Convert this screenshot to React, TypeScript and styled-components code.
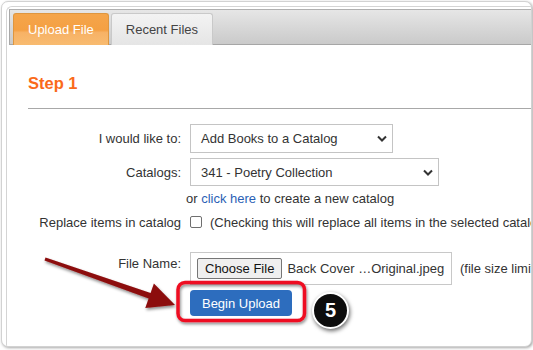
import React from 'react';
import styled, { createGlobalStyle } from 'styled-components';

const GlobalStyle = createGlobalStyle`
  html, body {
    margin: 0;
    padding: 0;
    background: #fff;
    font-family: "Liberation Sans", Arial, sans-serif;
  }
`;

const Page = styled.div`
  position: relative;
  width: 533px;
  height: 350px;
  overflow: hidden;
`;

const Frame = styled.div`
  box-sizing: border-box;
  margin: 1px 0 0 1px;
  width: 531px;
  height: 346px;
  border: 1px solid #d2d2d2;
  border-radius: 7px;
  box-shadow: 1px 1px 3px rgba(0, 0, 0, 0.35);
  overflow: hidden;
  background: #fff;
`;

const Inner = styled.div`
  box-sizing: border-box;
  margin: 4px 0 0 4px;
  height: calc(100% - 4px);
  padding: 2px 0 0 2px;
  border-left: 1px solid #d4d4d4;
  border-top: 1px solid #d4d4d4;
  border-top-left-radius: 6px;
`;

const TabBar = styled.div`
  display: flex;
  gap: 2px;
  height: 34px;
  padding-left: 3px;
  border-top: 1px solid #b0b0b0;
  border-left: 1px solid #a8a8a8;
  border-bottom: 1px solid #a6a6a6;
  background: linear-gradient(to bottom, #e6e6e6, #cacaca);
`;

const Tab = styled.div<{ $active?: boolean }>`
  box-sizing: border-box;
  margin-top: 3px;
  height: 32px;
  padding: 0 14px;
  display: flex;
  align-items: center;
  font-size: 13px;
  border-radius: 3px 3px 0 0;
  border: 1px solid ${p => (p.$active ? '#de963f' : '#c9c9c9')};
  border-bottom: none;
  color: ${p => (p.$active ? '#fff' : '#444')};
  background: ${p =>
    p.$active
      ? 'linear-gradient(to bottom, #f5a54a 0%, #f4a043 52%, #f7b266 60%, #f8bb70 100%)'
      : 'linear-gradient(to bottom, #f3f3f3, #e5e5e5)'};
`;

const Heading = styled.h2`
  margin: 28px 0 0 19px;
  font-size: 16.5px;
  line-height: 20px;
  font-weight: bold;
  color: #fa6a1a;
`;

const Rule = styled.div`
  margin: 15px 0 0 19px;
  border-top: 1px solid #a8a8a8;
`;

const Row = styled.div<{ $h: number; $mt: number }>`
  display: flex;
  align-items: center;
  height: ${p => p.$h}px;
  margin-top: ${p => p.$mt}px;
  font-size: 13px;
  color: #333;
  white-space: nowrap;
`;

const Label = styled.label<{ $top?: boolean }>`
  flex: none;
  width: 172px;
  margin-right: 9px;
  text-align: right;
  line-height: 15px;
  align-self: ${p => (p.$top ? 'flex-start' : 'center')};
  padding-top: ${p => (p.$top ? '4px' : '0')};
`;

const Select = styled.div<{ $w: number }>`
  box-sizing: border-box;
  width: ${p => p.$w}px;
  height: 100%;
  display: flex;
  align-items: center;
  justify-content: space-between;
  padding: 0 5px 0 10px;
  border: 1px solid #c4c4c4;
  background: #fff;
  color: #333;
`;

const Hint = styled.div`
  margin-left: 177px;
  line-height: 15px;
`;

const Link = styled.a`
  color: #2b5fb5;
  text-decoration: none;
`;

const Check = styled.span`
  box-sizing: border-box;
  flex: none;
  width: 12px;
  height: 12px;
  border: 1px solid #6f6f6f;
  border-radius: 2px;
  margin-right: 8px;
  background: #fff;
`;

const FileBox = styled.div`
  box-sizing: border-box;
  width: 262px;
  height: 33px;
  display: flex;
  align-items: center;
  padding-left: 6px;
  border: 1px solid #c8c8c8;
  flex: none;
`;

const ChooseButton = styled.button`
  box-sizing: border-box;
  height: 21px;
  padding: 0 7px;
  font: 13px "Liberation Sans", Arial, sans-serif;
  color: #111;
  background: #efefef;
  border: 1px solid #767676;
  border-radius: 2px;
  margin-right: 5px;
`;

const FileText = styled.span`
  color: #333;
`;

const SizeNote = styled.span`
  margin-left: 8px;
`;

const UploadButton = styled.button`
  box-sizing: border-box;
  width: 102px;
  height: 26px;
  margin-left: 181px;
  border: none;
  border-radius: 4px;
  background: #2d6dbe;
  color: #fff;
  font: 13px "Liberation Sans", Arial, sans-serif;
`;

const Overlay = styled.svg`
  position: absolute;
  left: 0;
  top: 0;
  pointer-events: none;
`;

const StepBadge = styled.div`
  position: absolute;
  left: 312px;
  top: 292px;
  box-sizing: border-box;
  width: 37px;
  height: 37px;
  border-radius: 50%;
  border: 2px solid #fff;
  background: #0d0d0d;
  box-shadow: 1px 2px 4px rgba(0, 0, 0, 0.6);
  display: flex;
  align-items: center;
  justify-content: center;
  color: #fff;
  font-size: 20px;
  font-weight: bold;
`;

const Chevron = () => (
  <svg width="10" height="7" viewBox="0 0 10 7">
    <polyline points="1,1.5 5,5.5 9,1.5" fill="none" stroke="#333" strokeWidth="2" />
  </svg>
);

export default function App() {
  return (
    <Page>
      <GlobalStyle />
      <Frame>
        <Inner>
          <TabBar>
            <Tab $active>Upload File</Tab>
            <Tab>Recent Files</Tab>
          </TabBar>
          <Heading>Step 1</Heading>
          <Rule />
          <Row $h={29} $mt={15}>
            <Label>I would like to:</Label>
            <Select $w={203}>
              <span>Add Books to a Catalog</span>
              <Chevron />
            </Select>
          </Row>
          <Row $h={28} $mt={5}>
            <Label>Catalogs:</Label>
            <Select $w={249}>
              <span>341 - Poetry Collection</span>
              <Chevron />
            </Select>
          </Row>
          <Row $h={16} $mt={4}>
            <Hint>
              or <Link href="#">click here</Link> to create a new catalog
            </Hint>
          </Row>
          <Row $h={20} $mt={6}>
            <Label>Replace items in catalog</Label>
            <Check />
            <span>(Checking this will replace all items in the selected catalog with the new file)</span>
          </Row>
          <Row $h={33} $mt={20}>
            <Label $top>File Name:</Label>
            <FileBox>
              <ChooseButton>Choose File</ChooseButton>
              <FileText>Back Cover …Original.jpeg</FileText>
            </FileBox>
            <SizeNote>(file size limit is 10 MB)</SizeNote>
          </Row>
          <Row $h={26} $mt={5}>
            <UploadButton>Begin Upload</UploadButton>
          </Row>
        </Inner>
      </Frame>

      <Overlay width="533" height="350" viewBox="0 0 533 350">
        <defs>
          <filter id="shadow" x="-20%" y="-20%" width="140%" height="160%">
            <feDropShadow dx="1" dy="2" stdDeviation="1.5" floodColor="#000" floodOpacity="0.45" />
          </filter>
        </defs>
        <polygon
          points="45.5,257.6 150.6,292.9 153.9,283.4 175,305 145.3,308 148.6,298.5 44.5,260.4"
          fill="#8c0b0b"
          filter="url(#shadow)"
        />
        <rect
          x="178"
          y="282.5"
          width="126.5"
          height="38"
          rx="7"
          fill="none"
          stroke="#ee1020"
          strokeWidth="3.5"
          filter="url(#shadow)"
        />
      </Overlay>
      <StepBadge>5</StepBadge>
    </Page>
  );
}
